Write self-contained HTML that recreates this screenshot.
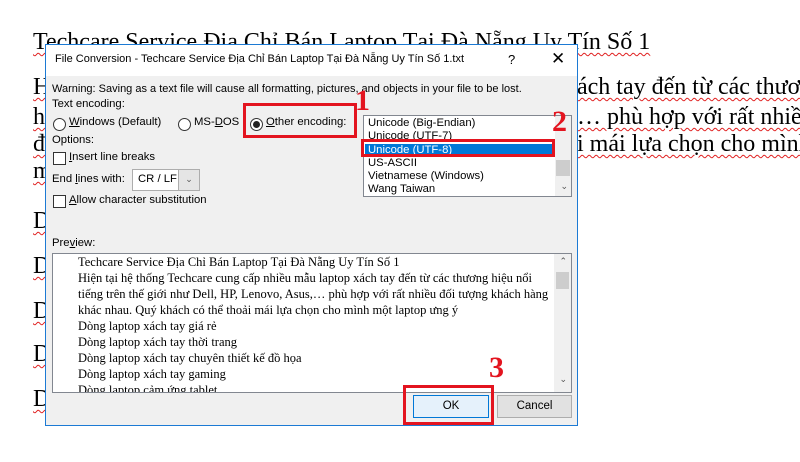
<!DOCTYPE html>
<html><head><meta charset="utf-8"><style>
*{margin:0;padding:0;box-sizing:border-box}
body{width:800px;height:462px;background:#fff;position:relative;overflow:hidden;font-family:"Liberation Sans",sans-serif}
.bg{position:absolute;font-family:"Liberation Serif",serif;font-size:24px;color:#000;white-space:nowrap;line-height:26px;text-decoration:underline wavy #e02020;text-decoration-thickness:1px;text-underline-offset:3px}
.dlg{position:absolute;left:45px;top:44px;width:533px;height:382px;background:#f0f0f0;border:1px solid #1c7ad4}
.t{position:absolute;font-size:11.3px;color:#000;white-space:nowrap}
.rb{position:absolute;width:13px;height:13px;border:1px solid #333;border-radius:50%;background:#fff}
.cb{position:absolute;width:13px;height:13px;border:1px solid #333;background:#fff}
.red{position:absolute;border:3px solid #e3141f}
.num{position:absolute;font-family:"Liberation Serif",serif;font-weight:bold;color:#e3141f;font-size:30px;line-height:30px}
.li{position:absolute;left:4px;font-size:11.3px;white-space:nowrap}
.pv{position:absolute;left:25px;font-family:"Liberation Serif",serif;font-size:12.5px;white-space:nowrap}
</style></head><body>
<div class="bg" style="left:33px;top:29px">Techcare Service Địa Chỉ Bán Laptop Tại Đà Nẵng Uy Tín Số 1</div>
<div class="bg" style="left:33px;top:74px">H</div>
<div class="bg" style="left:33px;top:104px">h</div>
<div class="bg" style="left:33px;top:131px">đ</div>
<div class="bg" style="left:33px;top:158px">m</div>
<div class="bg" style="left:33px;top:208px">D</div>
<div class="bg" style="left:33px;top:253px">D</div>
<div class="bg" style="left:33px;top:298px">D</div>
<div class="bg" style="left:33px;top:341px">D</div>
<div class="bg" style="left:33px;top:386px">D</div>
<div class="bg" style="left:577px;top:74px">ách tay đến từ các thương</div>
<div class="bg" style="left:577px;top:104px">… phù hợp với rất nhiều</div>
<div class="bg" style="left:577px;top:131px">i mái lựa chọn cho mình</div>

<div class="dlg">
<div style="position:absolute;left:0;top:0;width:531px;height:31px;background:#fff"></div>
<div class="t" style="left:9px;top:8px;font-size:11px">File Conversion - Techcare Service Địa Chỉ Bán Laptop Tại Đà Nẵng Uy Tín Số 1.txt</div>
<div class="t" style="left:462px;top:7px;font-size:13px">?</div>
<div class="t" style="left:505px;top:4px;font-size:17px;font-weight:300">✕</div>
<div class="t" style="left:6px;top:38px;font-size:11px">Warning: Saving as a text file will cause all formatting, pictures, and objects in your file to be lost.</div>
<div class="t" style="left:6px;top:53px">Text encoding:</div>
<div class="rb" style="left:7px;top:73px"></div>
<div class="t" style="left:23px;top:71px"><u>W</u>indows (Default)</div>
<div class="rb" style="left:132px;top:73px"></div>
<div class="t" style="left:148px;top:71px">MS-<u>D</u>OS</div>
<div class="rb" style="left:204px;top:73px"><div style="position:absolute;left:2px;top:2px;width:7px;height:7px;border-radius:50%;background:#222"></div></div>
<div class="t" style="left:220px;top:71px"><u>O</u>ther encoding:</div>
<div class="t" style="left:6px;top:89px">Options:</div>
<div class="cb" style="left:7px;top:107px"></div>
<div class="t" style="left:23px;top:106px"><u>I</u>nsert line breaks</div>
<div class="t" style="left:6px;top:128px">End <u>l</u>ines with:</div>
<div style="position:absolute;left:86px;top:124px;width:68px;height:22px;background:#fff;border:1px solid #adadad"></div>
<div class="t" style="left:92px;top:128px">CR / LF</div>
<div style="position:absolute;left:132px;top:124px;width:22px;height:22px;background:#e5e5e5;border:1px solid #adadad;font-size:9px;text-align:center;line-height:19px;color:#555">⌄</div>
<div class="cb" style="left:7px;top:150px"></div>
<div class="t" style="left:23px;top:149px"><u>A</u>llow character substitution</div>

<div style="position:absolute;left:317px;top:70px;width:209px;height:82px;background:#fff;border:1px solid #828790;overflow:hidden">
<div style="position:absolute;left:1px;top:28px;width:190px;height:13px;background:#0078d7"></div>
<div class="li" style="top:1px">Unicode (Big-Endian)</div>
<div class="li" style="top:14px">Unicode (UTF-7)</div>
<div class="li" style="top:28px;color:#fff">Unicode (UTF-8)</div>
<div class="li" style="top:41px">US-ASCII</div>
<div class="li" style="top:54px">Vietnamese (Windows)</div>
<div class="li" style="top:67px">Wang Taiwan</div>
<div style="position:absolute;right:0;top:0;width:16px;height:80px;background:#f0f0f0"></div>
<div style="position:absolute;right:1px;top:44px;width:14px;height:16px;background:#cdcdcd"></div>
<div style="position:absolute;right:3px;top:65px;font-size:9px;color:#555">⌄</div>
</div>

<div class="t" style="left:6px;top:192px">Pre<u>v</u>iew:</div>
<div style="position:absolute;left:6px;top:208px;width:520px;height:140px;background:#fff;border:1px solid #828790;overflow:hidden">
<div class="pv" style="top:1px">Techcare Service Địa Chỉ Bán Laptop Tại Đà Nẵng Uy Tín Số 1</div>
<div class="pv" style="top:17px">Hiện tại hệ thống Techcare cung cấp nhiều mẫu laptop xách tay đến từ các thương hiệu nổi</div>
<div class="pv" style="top:33px">tiếng trên thế giới như Dell, HP, Lenovo, Asus,… phù hợp với rất nhiều đối tượng khách hàng</div>
<div class="pv" style="top:49px">khác nhau. Quý khách có thể thoải mái lựa chọn cho mình một laptop ưng ý</div>
<div class="pv" style="top:65px">Dòng laptop xách tay giá rẻ</div>
<div class="pv" style="top:81px">Dòng laptop xách tay thời trang</div>
<div class="pv" style="top:97px">Dòng laptop xách tay chuyên thiết kế đồ họa</div>
<div class="pv" style="top:113px">Dòng laptop xách tay gaming</div>
<div class="pv" style="top:129px">Dòng laptop cảm ứng tablet</div>
<div style="position:absolute;right:0;top:0;width:17px;height:138px;background:#f0f0f0"></div>
<div style="position:absolute;right:2px;top:18px;width:13px;height:17px;background:#cdcdcd"></div>
<div style="position:absolute;right:4px;top:2px;font-size:9px;color:#555">⌃</div>
<div style="position:absolute;right:4px;top:120px;font-size:9px;color:#555">⌄</div>
</div>

<div style="position:absolute;left:367px;top:350px;width:76px;height:23px;background:#e5f1fb;border:1px solid #0078d7;font-size:11.5px;text-align:center;line-height:21px">OK</div>
<div style="position:absolute;left:451px;top:350px;width:75px;height:23px;background:#e1e1e1;border:1px solid #adadad;font-size:11.5px;text-align:center;line-height:21px">Cancel</div>
</div>

<div class="red" style="left:243px;top:103px;width:114px;height:35px"></div>
<div class="red" style="left:361px;top:139px;width:194px;height:18px"></div>
<div class="red" style="left:403px;top:385px;width:91px;height:40px"></div>
<div class="num" style="left:355px;top:86px">1</div>
<div class="num" style="left:552px;top:107px">2</div>
<div class="num" style="left:489px;top:353px">3</div>
</body></html>
